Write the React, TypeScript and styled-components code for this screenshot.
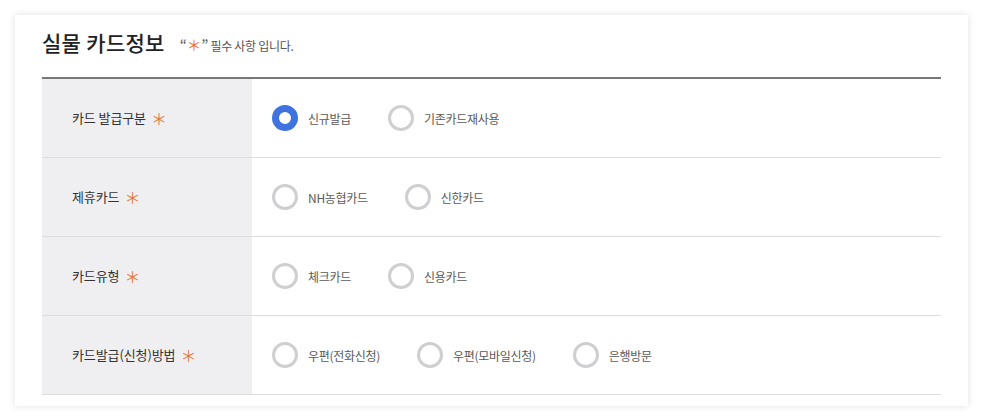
import React from "react";
import styled, { createGlobalStyle } from "styled-components";

const Global = createGlobalStyle`
  html, body { margin: 0; padding: 0; background: #ffffff; }
  body { font-family: "Noto Sans CJK KR", "Noto Sans", sans-serif; }
  * { box-sizing: border-box; }
`;

const Page = styled.div`
  padding: 15px 15px 14px 15px;
  width: 983px;
`;

const Card = styled.section`
  width: 953px;
  background: #fff;
  box-shadow: 0 0 7px rgba(0, 0, 0, 0.13);
  padding: 12px 27px 11px 27px;
`;

const Header = styled.div`
  display: flex;
  align-items: baseline;
  gap: 15px;
  margin-bottom: 20px;
`;

const Title = styled.h2`
  margin: 0;
  font-size: 21px;
  line-height: 30px;
  font-weight: 500;
  color: #222;
  letter-spacing: 0.3px;
`;

const Note = styled.span`
  font-size: 12px;
  color: #555;
  letter-spacing: -0.3px;
`;

const Quote = styled.span`
  font-size: 15px;
  color: #555;
`;

const Star = styled.span<{ $size?: number }>`
  color: #e57a3c;
  font-size: ${(p) => p.$size ?? 16}px;
  font-weight: 400;
  line-height: 1;
`;

const Table = styled.div`
  border-top: 2px solid #777;
`;

const Row = styled.div`
  display: grid;
  grid-template-columns: 210px 1fr;
  height: 79px;
  border-bottom: 1px solid #ddd;
`;

const Label = styled.div`
  background: #efeff2;
  display: flex;
  align-items: center;
  padding-left: 30px;
  padding-bottom: 1px;
  font-size: 13px;
  color: #333;
  letter-spacing: -0.1px;
  gap: 5px;
`;

const Options = styled.div`
  display: flex;
  align-items: center;
  padding-left: 20px;
  gap: 37px;
`;

const Option = styled.label`
  display: flex;
  align-items: center;
  gap: 10px;
  font-size: 12px;
  color: #5a5a5a;
  letter-spacing: -0.3px;
  cursor: pointer;
`;

const Radio = styled.span<{ $checked?: boolean }>`
  width: 26px;
  height: 26px;
  border-radius: 50%;
  border: ${(p) => (p.$checked ? "7px solid #3f73dd" : "3px solid #cfcfd2")};
  background: #fff;
  flex-shrink: 0;
`;

type RowData = { label: string; options: string[]; checked?: number };

const rows: RowData[] = [
  { label: "카드 발급구분", options: ["신규발급", "기존카드재사용"], checked: 0 },
  { label: "제휴카드", options: ["NH농협카드", "신한카드"] },
  { label: "카드유형", options: ["체크카드", "신용카드"] },
  { label: "카드발급(신청)방법", options: ["우편(전화신청)", "우편(모바일신청)", "은행방문"] },
];

export default function App() {
  return (
    <>
      <Global />
      <Page>
        <Card>
          <Header>
            <Title>실물 카드정보</Title>
            <Note>
              <Quote>“</Quote>
              <Star $size={15}>＊</Star>
              <Quote>”</Quote> 필수 사항 입니다.
            </Note>
          </Header>
          <Table>
            {rows.map((r) => (
              <Row key={r.label}>
                <Label>
                  {r.label} <Star>＊</Star>
                </Label>
                <Options>
                  {r.options.map((o, i) => (
                    <Option key={o}>
                      <Radio $checked={r.checked === i} />
                      {o}
                    </Option>
                  ))}
                </Options>
              </Row>
            ))}
          </Table>
        </Card>
      </Page>
    </>
  );
}
